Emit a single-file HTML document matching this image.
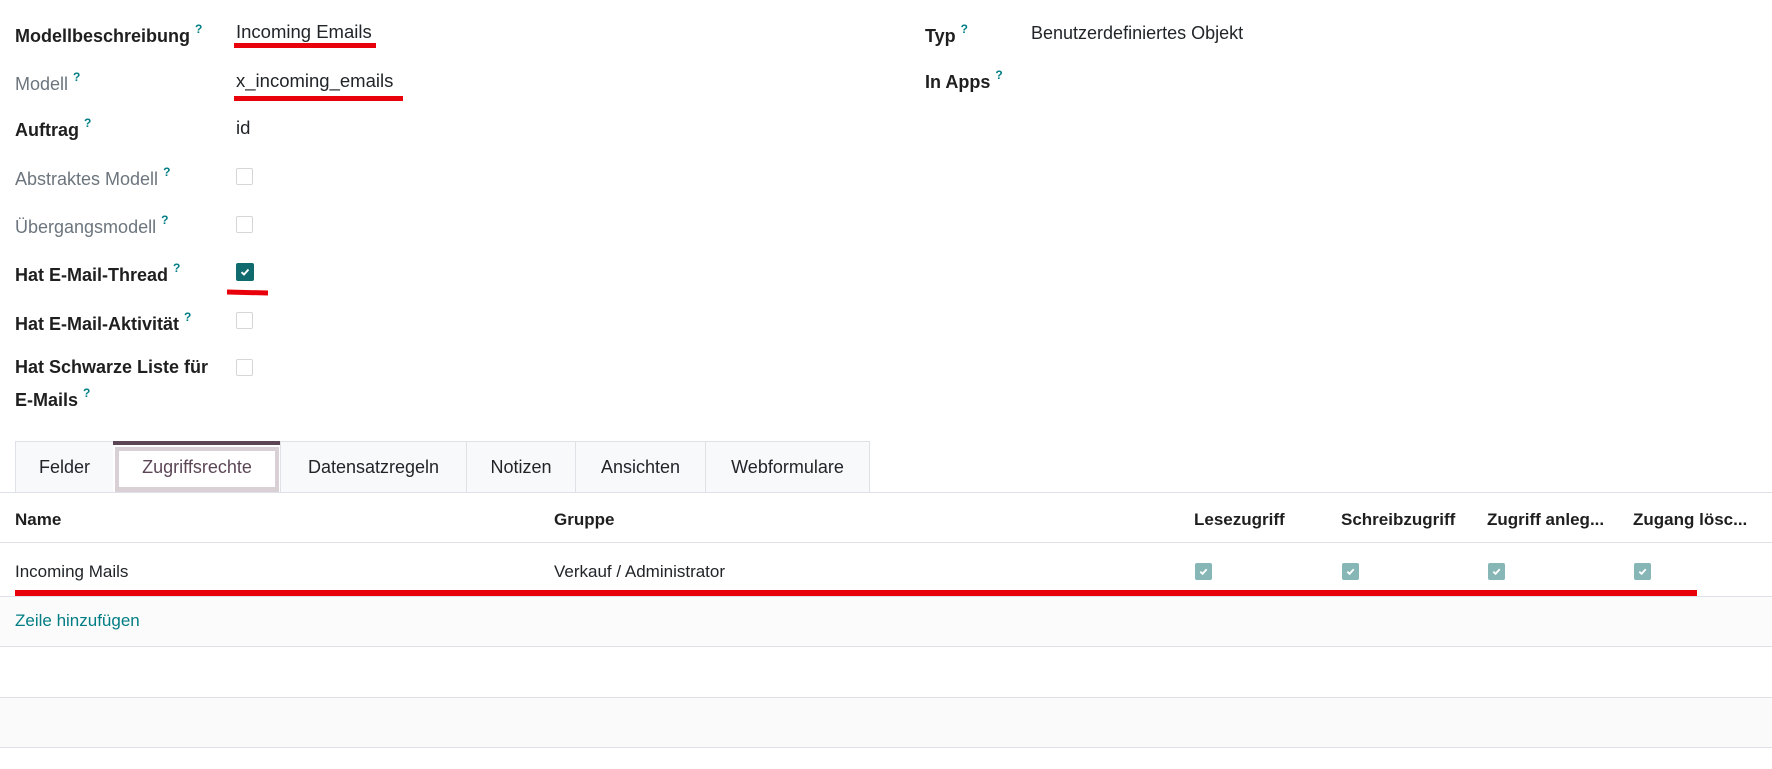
<!DOCTYPE html>
<html><head><meta charset="utf-8"><style>
body{margin:0;width:1772px;height:769px;background:#fff;font-family:"Liberation Sans",sans-serif;color:#212529;font-size:18px;position:relative;overflow:hidden}
.a{position:absolute;white-space:nowrap}
.l{font-weight:bold;color:#1f1f1f}
.g{color:#6c757d}
sup{color:#017e84;font-size:12px;font-weight:bold;margin-left:5px;vertical-align:9px}
.cb{position:absolute;width:17px;height:17px;border:1px solid #d6d6d6;border-radius:2px;box-sizing:border-box;background:#fff}
.red{position:absolute;background:#e8000b}
.tab{position:absolute;top:441px;height:51px;border:1px solid #dee2e6;border-bottom:none;background:#f8f9fa;box-sizing:border-box;text-align:center;line-height:51px;font-size:18px}
.hl{position:absolute;left:0;width:1772px;height:1px;background:#dee2e6}
.ck{position:absolute;width:17px;height:17px;background:#86b6b5;border-radius:2px}
.ck svg{position:absolute;left:3px;top:3px}
.t{font-size:17px}
</style></head><body>
<div class="a l" style="left:15px;top:22px">Modellbeschreibung<sup>?</sup></div>
<div class="a" style="left:236px;top:21px;font-size:18.5px">Incoming Emails</div>
<div class="red" style="left:234px;top:43px;width:142px;height:5px"></div>
<div class="a g" style="left:15px;top:70px">Modell<sup>?</sup></div>
<div class="a" style="left:236px;top:70px;font-size:18.5px">x_incoming_emails</div>
<div class="red" style="left:234px;top:96px;width:169px;height:5px"></div>
<div class="a l" style="left:15px;top:116px">Auftrag<sup>?</sup></div>
<div class="a" style="left:236px;top:117px;font-size:18.5px">id</div>
<div class="a g" style="left:15px;top:165px">Abstraktes Modell<sup>?</sup></div>
<div class="cb" style="left:236px;top:168px"></div>
<div class="a g" style="left:15px;top:213px">Übergangsmodell<sup>?</sup></div>
<div class="cb" style="left:236px;top:216px"></div>
<div class="a l" style="left:15px;top:261px">Hat E-Mail-Thread<sup>?</sup></div>
<div class="ck" style="left:236px;top:263px;width:18px;height:18px;background:#0f6b6d"><svg width="12" height="12" viewBox="0 0 12 12"><path d="M2.5 6.2 L5 8.5 L9.5 3.5" stroke="#fff" stroke-width="2" fill="none"/></svg></div>
<div class="red" style="left:227px;top:290px;width:41px;height:5px;transform:rotate(1.5deg)"></div>
<div class="a l" style="left:15px;top:310px">Hat E-Mail-Aktivität<sup>?</sup></div>
<div class="cb" style="left:236px;top:312px"></div>
<div class="a l" style="left:15px;top:357px">Hat Schwarze Liste für</div>
<div class="a l" style="left:15px;top:386px">E-Mails<sup>?</sup></div>
<div class="cb" style="left:236px;top:359px"></div>
<div class="a l" style="left:925px;top:22px">Typ<sup>?</sup></div>
<div class="a" style="left:1031px;top:23px">Benutzerdefiniertes Objekt</div>
<div class="a l" style="left:925px;top:68px">In Apps<sup>?</sup></div>

<div class="tab" style="left:15px;width:99px">Felder</div>
<div class="tab" style="left:113px;width:168px;background:#fff;border:none;border-top:4px solid #5c4656;line-height:44px;color:#5c4656"><div style="position:absolute;left:2px;right:2px;top:2px;bottom:0;border:4px solid #d9d0d6;border-bottom-width:5px"></div>Zugriffsrechte</div>
<div class="tab" style="left:280px;width:187px">Datensatzregeln</div>
<div class="tab" style="left:466px;width:110px">Notizen</div>
<div class="tab" style="left:575px;width:131px">Ansichten</div>
<div class="tab" style="left:705px;width:165px">Webformulare</div>
<div class="hl" style="top:492px"></div>
<div class="a l t" style="left:15px;top:510px">Name</div>
<div class="a l t" style="left:554px;top:510px">Gruppe</div>
<div class="a l t" style="left:1194px;top:510px">Lesezugriff</div>
<div class="a l t" style="left:1341px;top:510px">Schreibzugriff</div>
<div class="a l t" style="left:1487px;top:510px">Zugriff anleg...</div>
<div class="a l t" style="left:1633px;top:510px">Zugang lösc...</div>
<div class="hl" style="top:542px"></div>
<div class="a t" style="left:15px;top:562px">Incoming Mails</div>
<div class="a t" style="left:554px;top:562px">Verkauf / Administrator</div>
<div class="ck" style="left:1195px;top:563px"><svg width="11" height="11" viewBox="0 0 12 12"><path d="M2.5 6.2 L5 8.5 L9.5 3.5" stroke="#fff" stroke-width="2" fill="none"/></svg></div>
<div class="ck" style="left:1342px;top:563px"><svg width="11" height="11" viewBox="0 0 12 12"><path d="M2.5 6.2 L5 8.5 L9.5 3.5" stroke="#fff" stroke-width="2" fill="none"/></svg></div>
<div class="ck" style="left:1488px;top:563px"><svg width="11" height="11" viewBox="0 0 12 12"><path d="M2.5 6.2 L5 8.5 L9.5 3.5" stroke="#fff" stroke-width="2" fill="none"/></svg></div>
<div class="ck" style="left:1634px;top:563px"><svg width="11" height="11" viewBox="0 0 12 12"><path d="M2.5 6.2 L5 8.5 L9.5 3.5" stroke="#fff" stroke-width="2" fill="none"/></svg></div>
<div style="position:absolute;left:0;top:596px;width:1772px;height:50px;background:#fbfbfb"></div>
<div class="red" style="left:15px;top:590px;width:1682px;height:6px"></div>
<div class="hl" style="top:596px"></div>
<div class="a t" style="left:15px;top:611px;color:#017e84">Zeile hinzufügen</div>
<div class="hl" style="top:646px"></div>
<div style="position:absolute;left:0;top:697px;width:1772px;height:50px;background:#fafafa"></div>
<div class="hl" style="top:697px"></div>
<div class="hl" style="top:747px"></div>
</body></html>
